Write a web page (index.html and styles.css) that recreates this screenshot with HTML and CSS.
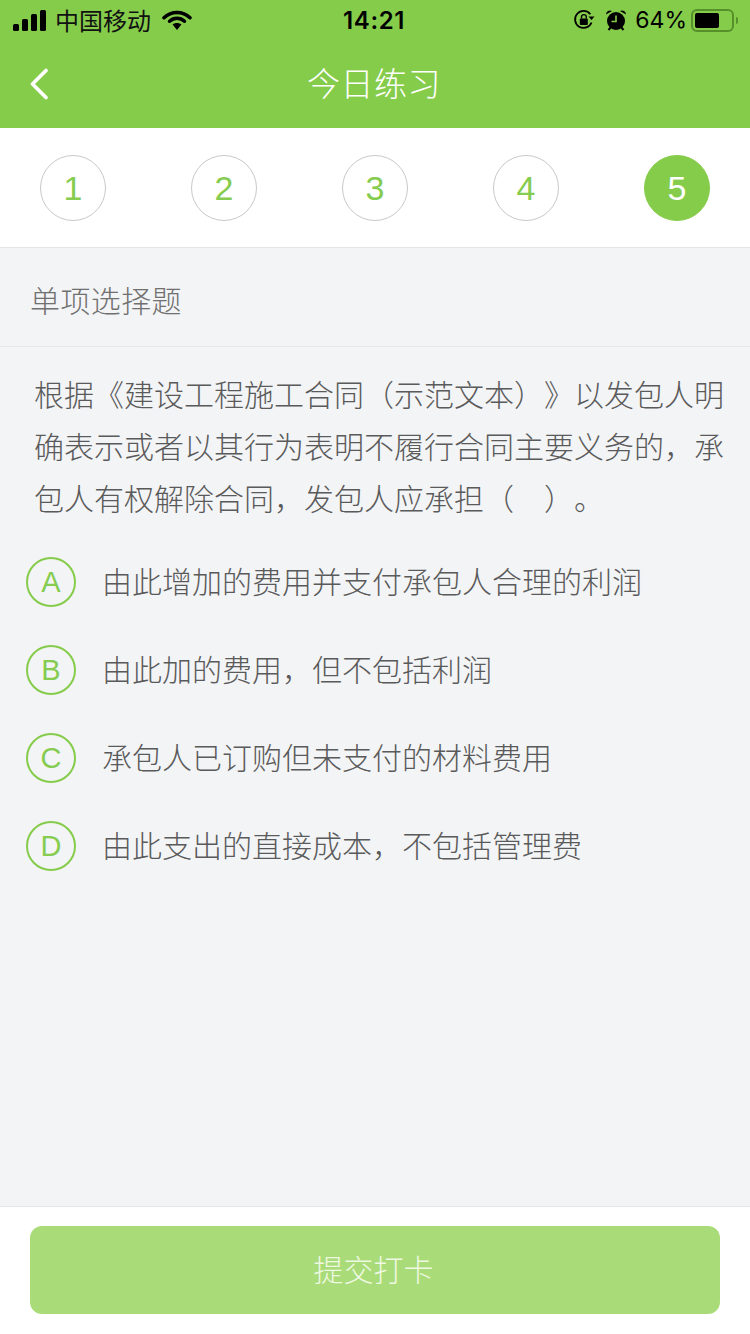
FILE: index.html
```html
<!DOCTYPE html>
<html lang="zh-CN">
<head>
<meta charset="utf-8">
<title>今日练习</title>
<link rel="stylesheet" href="styles.css">
</head>
<body>
<div class="page">
  <header class="header">
    <div class="status">
      <div class="status-left">
        <svg class="signal" width="33" height="21" viewBox="0 0 33 21"><rect x="0" y="14" width="6" height="7" rx="1.500"/><rect x="9" y="9" width="6" height="12" rx="1.500"/><rect x="18" y="4" width="6" height="17" rx="1.500"/><rect x="27" y="0" width="6" height="21" rx="1.500"/></svg>
        <span class="carrier">中国移动</span>
        <svg class="wifi" width="30" height="22" viewBox="0 0 30 22"><path d="M15 3.500c-5 0-9.500 1.900-13 5.200" fill="none" stroke="#000" stroke-width="3.600" stroke-linecap="round"/><path d="M15 3.500c5 0 9.500 1.900 13 5.200" fill="none" stroke="#000" stroke-width="3.600" stroke-linecap="round"/><path d="M7.500 12.300c2-1.900 4.600-3 7.500-3s5.500 1.100 7.500 3" fill="none" stroke="#000" stroke-width="3.400" stroke-linecap="round"/><path d="M10.600 15.600c1.200-1 2.700-1.500 4.400-1.500s3.200.5 4.400 1.500L15 21z"/></svg>
      </div>
      <div class="time">14:21</div>
      <div class="status-right">
        <svg class="lock" width="22" height="22" viewBox="0 0 22 22"><path d="M18.500 13.500A8.500 8.500 0 1 1 17.300 5.200" fill="none" stroke="#000" stroke-width="1.800"/><path d="M15.500 8.600h6l-3-3.600z" transform="rotate(180 18.500 8)"/><rect x="6.800" y="9.500" width="8" height="6.500" rx="1"/><path d="M8.500 9.500V8a2.400 2.400 0 0 1 4.800 0v1.500" fill="none" stroke="#000" stroke-width="1.400"/></svg>
        <svg class="alarm" width="22" height="24" viewBox="0 0 22 24"><circle cx="11" cy="13" r="9"/><path d="M1 6.500a4 4 0 0 1 6-3.500zM21 6.500a4 4 0 0 0-6-3.500z"/><path d="M3.500 22l2.500-3M18.500 22L16 19" stroke="#000" stroke-width="2"/><path d="M11 7.500V13.500H6.500" fill="none" stroke="#86cc4b" stroke-width="1.600"/></svg>
        <span class="percent">64%</span>
        <div class="battery"><div class="battery-level"></div></div>
        <div class="battery-tip"></div>
      </div>
    </div>
    <nav class="nav">
      <svg class="back" width="20" height="32" viewBox="0 0 20 32"><path d="M17 2.500L3.500 16 17 29.500" fill="none" stroke="#fff" stroke-width="3.600" stroke-linecap="round" stroke-linejoin="round"/></svg>
      <h1 class="title">今日练习</h1>
    </nav>
  </header>

  <section class="steps">
    <div class="step">1</div>
    <div class="step">2</div>
    <div class="step">3</div>
    <div class="step">4</div>
    <div class="step step-current">5</div>
  </section>

  <main class="main">
    <div class="label">单项选择题</div>
    <p class="question">根据《建设工程施工合同（示范文本）》以发包人明确表示或者以其行为表明不履行合同主要义务的，承包人有权解除合同，发包人应承担（　）。</p>
    <ul class="options">
      <li class="option"><span class="badge">A</span><span class="option-text">由此增加的费用并支付承包人合理的利润</span></li>
      <li class="option"><span class="badge">B</span><span class="option-text">由此加的费用，但不包括利润</span></li>
      <li class="option"><span class="badge">C</span><span class="option-text">承包人已订购但未支付的材料费用</span></li>
      <li class="option"><span class="badge">D</span><span class="option-text">由此支出的直接成本，不包括管理费</span></li>
    </ul>
  </main>

  <footer class="footer">
    <button class="submit" type="button">提交打卡</button>
  </footer>
</div>
</body>
</html>
```
FILE: styles.css
```css
* { box-sizing: border-box; }
html, body { margin: 0; padding: 0; }
body {
  width: 750px;
  height: 1334px;
  overflow: hidden;
  font-family: "Noto Sans CJK SC", "Liberation Sans", sans-serif;
  background: #f3f4f6;
  text-spacing-trim: space-all;
  font-feature-settings: "chws" 0, "palt" 0;
}
.page {
  display: flex;
  flex-direction: column;
  height: 1334px;
}
.header { background: #86cc4b; height: 128px; flex: none; }
.status {
  height: 40px;
  display: grid;
  grid-template-columns: 1fr auto 1fr;
  align-items: center;
  color: #000;
  padding: 0 12px 0 13px;
}
.status-left, .status-right { display: flex; align-items: center; }
.status-right { justify-content: flex-end; }
.signal { margin-right: 9px; }
.carrier { font-size: 24px; line-height: 40px; color: #111; margin-left: 0; }
.wifi { margin-left: 11px; }
.time { font-family: Inter, "Liberation Sans", sans-serif; font-size: 24px; font-weight: 600; letter-spacing: 0.6px; margin-left: -3px; }
.lock { margin-right: 10px; }
.alarm { margin-right: 8px; }
.percent { font-family: Inter, "Liberation Sans", sans-serif; font-size: 23px; margin-right: 4px; }
.battery {
  width: 43px;
  height: 23px;
  border: 2px solid #55902a;
  border-radius: 6px;
  padding: 2px;
}
.battery-level { width: 24px; height: 100%; background: #000; border-radius: 2px; }
.battery-tip { width: 2px; height: 7px; background: #55902a; margin-left: 2px; border-radius: 0 2px 2px 0; }
.nav {
  height: 88px;
  position: relative;
  display: flex;
  align-items: center;
  justify-content: center;
}
.back { position: absolute; left: 29px; top: 28px; }
.title { margin: 0 2px 4px 0; font-size: 33px; font-weight: 300; color: #fff; line-height: 84px; letter-spacing: 0.5px; }
.steps {
  flex: none;
  height: 120px;
  background: #fff;
  border-bottom: 1px solid #e4e5e7;
  padding: 1px 40px 0;
  display: flex;
  align-items: center;
  justify-content: space-between;
}
.step {
  width: 66px;
  height: 66px;
  border: 1px solid #c9c9c9;
  border-radius: 50%;
  display: flex;
  align-items: center;
  justify-content: center;
  font-family: "Liberation Sans", sans-serif;
  font-weight: 400;
  font-size: 34px;
  color: #85cc50;
}
.step-current { background: #86cc4b; border-color: #86cc4b; color: #fff; }
.main { flex: 1; }
.label {
  height: 99px;
  border-bottom: 1px solid #e6e7e9;
  padding: 4px 0 0 30px;
  display: flex;
  align-items: center;
  font-size: 30px;
  font-weight: 300;
  color: #707070;
  letter-spacing: 0.4px;
}
.question {
  margin: 0;
  padding: 20px 25px 0 34px;
  font-size: 30px;
  line-height: 52px;
  font-weight: 300;
  color: #5a5a5a;
}
.options { list-style: none; margin: 15px 0 0; padding: 0 0 0 26px; }
.option { height: 88px; display: flex; align-items: center; }
.badge {
  flex: none;
  width: 50px;
  height: 50px;
  border: 2px solid #86cc4b;
  border-radius: 50%;
  display: flex;
  align-items: center;
  justify-content: center;
  font-family: "Liberation Sans", sans-serif;
  font-weight: 400;
  font-size: 29px;
  color: #85cc50;
}
.option-text { margin: 0 0 4px 26px; font-size: 30px; font-weight: 300; color: #5a5a5a; }
.footer {
  flex: none;
  height: 128px;
  background: #fff;
  border-top: 1px solid #e6e7ea;
  padding: 19px 30px 0;
}
.submit {
  display: block;
  width: 100%;
  height: 88px;
  border: 0;
  border-radius: 12px;
  background: #a9dc78;
  color: #eef8e2;
  font-family: inherit;
  font-size: 30px;
  font-weight: 300;
  padding: 0 3px 4px 0;
}
```
